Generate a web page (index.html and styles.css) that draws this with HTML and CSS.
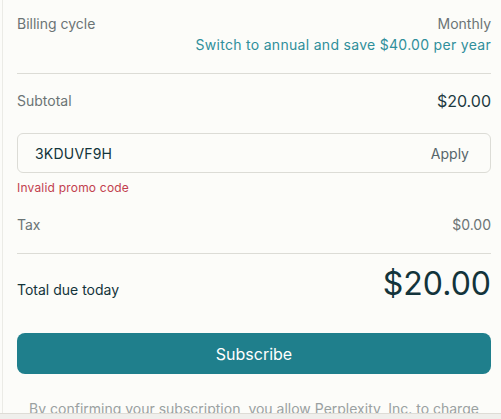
FILE: index.html
```html
<!DOCTYPE html>
<html lang="en">
  <head>
    <meta charset="UTF-8" />
    <meta name="viewport" content="width=device-width, initial-scale=1.0" />
    <title>Checkout</title>
    <link rel="stylesheet" href="styles.css">
  </head>
  <body>
    <div class="checkout">
      <div class="row billing">
        <span class="label">Billing cycle</span>
        <div class="billing-right">
          <span class="label">Monthly</span>
          <a class="switch" href="#">Switch to annual and save $40.00 per year</a>
        </div>
      </div>

      <hr class="divider" />

      <div class="row subtotal">
        <span class="label">Subtotal</span>
        <span class="amount">$20.00</span>
      </div>

      <div class="promo">
        <input class="promo-input" type="text" value="3KDUVF9H" />
        <button class="apply">Apply</button>
      </div>
      <p class="promo-error">Invalid promo code</p>

      <div class="row tax">
        <span class="label">Tax</span>
        <span class="label">$0.00</span>
      </div>

      <hr class="divider" />

      <div class="row total">
        <span class="total-label">Total due today</span>
        <span class="total-amount">$20.00</span>
      </div>

      <button class="subscribe">Subscribe</button>

      <p class="legal">By confirming your subscription, you allow Perplexity, Inc. to charge</p>
    </div>
    <div class="bottom-edge"></div>
  </body>
</html>
```

FILE: styles.css
```css
/* Reset */
body {
  margin: 0;
  font-family: Inter, "Noto Sans", sans-serif;
  background: #fcfcf9;
  color: #13343b;
  height: 100vh;
  overflow: hidden;
}

/* Panel */
.checkout {
  margin-left: 2px;
  border-left: 1px solid #ebebe6;
  padding: 14px 10px 0 14px;
  min-height: 100vh;
}

.row {
  display: flex;
  justify-content: space-between;
}

.label {
  font-size: 14px;
  line-height: 20px;
  color: #6b7475;
}

/* Billing cycle */
.billing-right {
  display: flex;
  flex-direction: column;
  align-items: flex-end;
  gap: 1px;
}

.switch {
  font-size: 14px;
  line-height: 20px;
  letter-spacing: 0.3px;
  color: #2f8f9b;
  text-decoration: none;
}

.divider {
  border: none;
  border-top: 1px solid #dcdcd6;
  margin: 18px 0 0;
}

/* Subtotal */
.subtotal {
  margin-top: 16px;
  align-items: center;
}

.amount {
  font-size: 16px;
  line-height: 22px;
  color: #1d3a41;
}

/* Promo code */
.promo {
  margin-top: 21px;
  display: flex;
  align-items: center;
  height: 40px;
  border: 1px solid #dcdcd6;
  border-radius: 6px;
  box-sizing: border-box;
  background: #fcfcf9;
}

.promo-input {
  flex: 1;
  border: none;
  background: transparent;
  font-family: inherit;
  font-size: 14px;
  letter-spacing: 0.2px;
  color: #13343b;
  padding: 0 17px;
  outline: none;
}

.apply {
  background: none;
  border: none;
  font-family: inherit;
  font-size: 14px;
  color: #56656a;
  padding: 0 21px 0 10px;
  cursor: pointer;
}

.promo-error {
  margin: 7px 0 0;
  font-size: 12px;
  line-height: 16px;
  letter-spacing: 0.2px;
  color: #c2404e;
}

/* Tax */
.tax {
  margin-top: 19px;
}

/* Total */
.total {
  margin-top: 10px;
  align-items: baseline;
}

.total-label {
  font-size: 14px;
  line-height: 20px;
}

.total-amount {
  font-size: 32px;
  line-height: 40px;
  color: #13343b;
}

/* Subscribe button */
.subscribe {
  margin-top: 29px;
  width: 100%;
  height: 41px;
  border: none;
  border-radius: 8px;
  background: #1f7f8c;
  color: white;
  font-family: inherit;
  font-size: 16px;
  cursor: pointer;
}

.legal {
  margin: 25px 0 0;
  font-size: 14px;
  line-height: 20px;
  color: #9aa1a1;
  text-align: center;
  white-space: nowrap;
}

.bottom-edge {
  position: fixed;
  left: 0;
  right: 0;
  bottom: 0;
  height: 5px;
  border-top: 1px solid #dedcd6;
  background: #efefec;
}
```
